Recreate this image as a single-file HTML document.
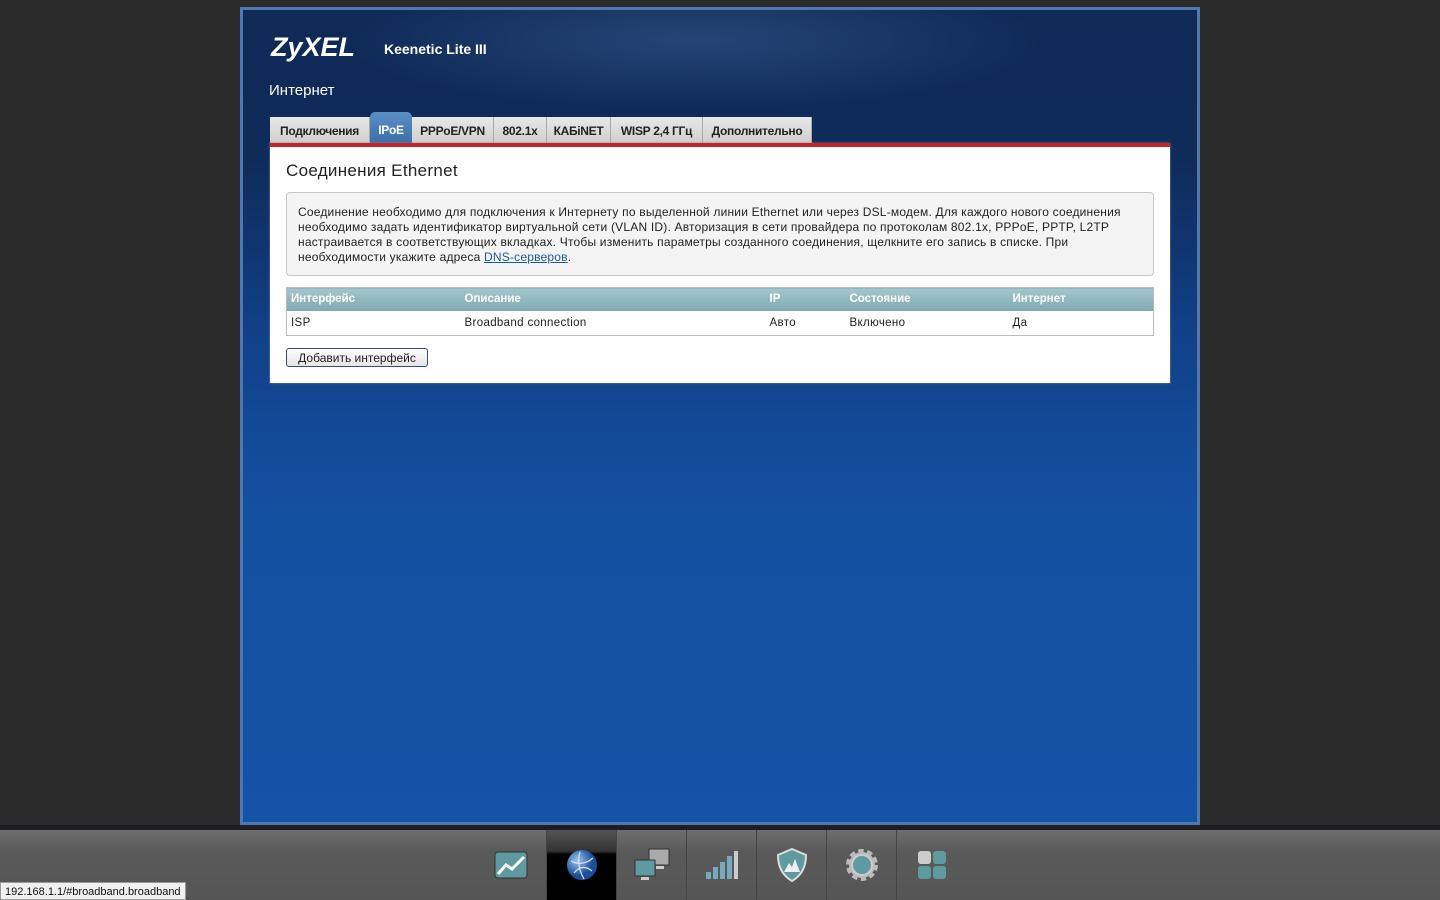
<!DOCTYPE html>
<html><head><meta charset="utf-8"><style>
*{box-sizing:border-box;margin:0;padding:0}
body{width:1440px;height:900px;overflow:hidden;background:#2b2b2b;font-family:"Liberation Sans",Arial,sans-serif;position:relative}
.frame{position:absolute;left:240px;top:7px;width:960px;height:818px;border:3px solid #4f78b0;background:linear-gradient(#0f2a57 0px,#0f2b5a 150px,#11418a 330px,#1450a0 500px,#1553a6 818px);overflow:hidden}
.shine{position:absolute;left:100px;top:-40px;width:700px;height:140px;background:radial-gradient(ellipse closest-side,rgba(90,130,190,.3),rgba(90,130,190,0))}
.logo{position:absolute;left:28px;top:22px;color:#fff;font-size:27px;font-weight:bold;font-style:italic}
.model{position:absolute;left:141px;top:31px;color:#fff;font-size:14px;font-weight:bold}
.sect{position:absolute;left:26px;top:72px;color:#fff;font-size:15px}
.tabs{position:absolute;left:27px;top:107px;height:26px;display:flex}
.tab{height:26px;background:linear-gradient(#e8e8e8,#cfcfcf);border-right:1px solid #aaa;color:#222;font-size:12px;font-weight:bold;padding-top:7px;text-align:center;letter-spacing:-.3px}
.tab.act{background:linear-gradient(#5b8fc4,#3a6fa8);color:#fff;margin-top:-5px;height:31px;padding-top:11px;border-radius:5px 5px 0 0;border-right:none}
.panel{position:absolute;left:27px;top:133px;width:900px;height:240px;background:#fff;border-top:4px solid #c8242b;box-shadow:0 0 2px #888}
h2{position:absolute;left:16px;top:14px;font-size:17px;font-weight:normal;color:#222;letter-spacing:.3px}
.info{position:absolute;left:16px;top:45px;width:868px;height:84px;border:1px solid #c8c8c8;border-radius:4px;background:#f4f4f4;padding:12px 11px;font-size:12px;letter-spacing:.2px;line-height:15px;color:#222;white-space:nowrap}
.info a{color:#1c5ba0;text-decoration:underline}
table{position:absolute;left:16px;top:140px;width:868px;border-collapse:collapse;border:1px solid #bbb;font-size:11.5px;letter-spacing:.35px}
th{background:linear-gradient(#a4c6cc,#7ea9b1);color:#fff;text-align:left;height:23px;padding-left:4px;font-weight:bold;letter-spacing:0}
td{height:25px;padding-left:4px;color:#222}
.btn{position:absolute;left:16px;top:201px;width:142px;height:19px;border:1px solid #30507a;border-radius:3px;background:linear-gradient(#fff,#e4e4e4);font-size:12px;text-align:center;line-height:18px;color:#222}
.bar{position:absolute;left:0;top:830px;width:1440px;height:70px;background:linear-gradient(#6e6e6e,#5a5a5a 30%,#555)}
.bar:before{content:"";position:absolute;left:0;top:-5px;width:1440px;height:5px;background:#1e1e22}
.it{position:absolute;top:0;width:70px;height:70px;border-left:1px solid #444;display:flex;align-items:center;justify-content:center}
.it.act{background:linear-gradient(#555 0,#333 30%,#000 35%,#000)}
.status{position:absolute;left:0;top:882px;height:18px;padding:3px 4px;background:#f0f0f0;border:1px solid #999;font-size:11px;color:#111}
</style></head><body>
<div class="frame">
<div class="shine"></div>
<div class="logo">ZyXEL</div>
<div class="model">Keenetic Lite III</div>
<div class="sect">Интернет</div>
<div class="tabs">
<div class="tab" style="width:100px">Подключения</div><div class="tab act" style="width:42px">IPoE</div><div class="tab" style="width:82px">PPPoE/VPN</div><div class="tab" style="width:53px">802.1x</div><div class="tab" style="width:64px">КАБiNET</div><div class="tab" style="width:92px">WISP 2,4 ГГц</div><div class="tab" style="width:109px">Дополнительно</div>
</div>
<div class="panel">
<h2>Соединения Ethernet</h2>
<div class="info">Соединение необходимо для подключения к Интернету по выделенной линии Ethernet или через DSL-модем. Для каждого нового соединения<br>необходимо задать идентификатор виртуальной сети (VLAN ID). Авторизация в сети провайдера по протоколам 802.1x, PPPoE, PPTP, L2TP<br>настраивается в соответствующих вкладках. Чтобы изменить параметры созданного соединения, щелкните его запись в списке. При<br>необходимости укажите адреса <a>DNS-серверов</a>.</div>
<table><tr><th style="width:174px">Интерфейс</th><th style="width:305px">Описание</th><th style="width:80px">IP</th><th style="width:163px">Состояние</th><th>Интернет</th></tr>
<tr><td>ISP</td><td>Broadband connection</td><td>Авто</td><td>Включено</td><td>Да</td></tr></table>
<div class="btn">Добавить интерфейс</div>
</div>
</div>
<div class="bar">
<div class="it" style="left:476px;border:none"><svg width="34" height="28"><rect x="1" y="1" width="32" height="26" rx="3" fill="#5e9aa0" stroke="#333"/><polyline points="4,23 12,14 18,18 30,6" fill="none" stroke="#fff" stroke-width="3"/></svg></div>
<div class="it act" style="left:546px"><svg width="32" height="32"><defs><radialGradient id="g" cx=".35" cy=".35"><stop offset="0" stop-color="#9cc8f0"/><stop offset="1" stop-color="#1a4f9a"/></radialGradient></defs><circle cx="16" cy="16" r="15" fill="url(#g)"/><path d="M5 12q11 6 22-3M8 24q8-10 18-2M14 3q-4 13 4 27" stroke="#dde" fill="none" stroke-width="1.3"/></svg></div>
<div class="it" style="left:616px"><svg width="36" height="34"><rect x="15" y="1" width="20" height="16" fill="#aaa" stroke="#333"/><rect x="1" y="12" width="20" height="16" fill="#5e9aa0" stroke="#333"/><rect x="7" y="29" width="8" height="3" fill="#ccc"/><rect x="22" y="18" width="8" height="3" fill="#ccc"/></svg></div>
<div class="it" style="left:686px"><svg width="34" height="30"><rect x="1" y="22" width="5" height="7" fill="#7ab"/><rect x="8" y="17" width="5" height="12" fill="#7ab"/><rect x="15" y="12" width="5" height="17" fill="#7ab"/><rect x="22" y="6" width="5" height="23" fill="#7ab"/><rect x="29" y="1" width="4" height="28" fill="#ccc"/></svg></div>
<div class="it" style="left:756px"><svg width="30" height="34"><path d="M15 1L29 7Q29 25 15 33Q1 25 1 7Z" fill="#5e9aa0" stroke="#ddd" stroke-width="2"/><path d="M7 24l5-9 3 4 3-8 5 13z" fill="#eee"/></svg></div>
<div class="it" style="left:826px"><svg width="34" height="34"><circle cx="17" cy="17" r="13" fill="#bbb" stroke="#bbb" stroke-width="6" stroke-dasharray="5 3.2"/><circle cx="17" cy="17" r="10" fill="#5e9aa0" stroke="#ccc" stroke-width="2"/></svg></div>
<div class="it" style="left:896px"><svg width="30" height="30"><rect x="1" y="1" width="13" height="13" rx="3" fill="#ccc"/><rect x="16" y="1" width="13" height="13" rx="3" fill="#5e9aa0"/><rect x="1" y="16" width="13" height="13" rx="3" fill="#5e9aa0"/><rect x="16" y="16" width="13" height="13" rx="3" fill="#5e9aa0"/></svg></div>
</div>
<div class="status">192.168.1.1/#broadband.broadband</div>
</body></html>
